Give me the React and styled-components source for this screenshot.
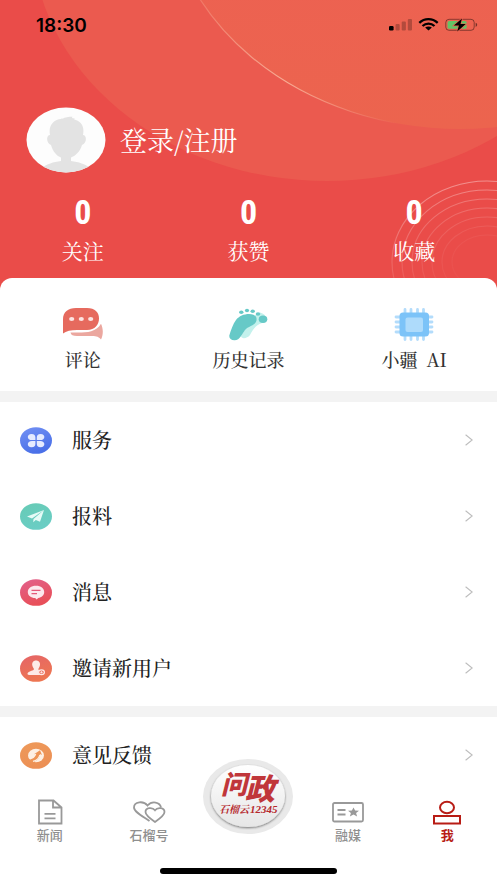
import styled, { createGlobalStyle } from "styled-components";

const serif = `"Noto Serif CJK SC", "Liberation Serif", "Noto Sans CJK SC", serif`;
const sans = `"Noto Sans CJK SC", "Liberation Sans", sans-serif`;

const stats = [
  { label: "关注", value: 0 },
  { label: "获赞", value: 0 },
  { label: "收藏", value: 0 },
];

const rings = [0, 1, 2, 3, 4, 5, 6];

export default function App() {
  return (
    <Container>
      <GlobalStyle />
      <Hero>
        <HeroArt />
        <StatusBar>
          <time>18:30</time>
          <StatusIcons />
        </StatusBar>
        <Profile href="#login">
          <AvatarIcon />
          <span>登录/注册</span>
        </Profile>
        <Stats>
          {stats.map((item) => (
            <Stat href="#stat" key={item.label}>
              <strong>{item.value}</strong>
              <span>{item.label}</span>
            </Stat>
          ))}
        </Stats>
      </Hero>
      <Shortcuts>
        <Shortcut><CommentIcon />评论</Shortcut>
        <Shortcut><FootIcon />历史记录</Shortcut>
        <Shortcut><ChipIcon />小疆&nbsp; AI</Shortcut>
      </Shortcuts>
      <Menu>
        <MenuRow icon={<ServiceIcon />} text="服务" />
        <MenuRow icon={<PlaneIcon />} text="报料" />
        <MenuRow icon={<MessageIcon />} text="消息" />
        <MenuRow icon={<InviteIcon />} text="邀请新用户" />
      </Menu>
      <Menu>
        <MenuRow icon={<FeedbackIcon />} text="意见反馈" />
      </Menu>
      <TabBar>
        <Tabs>
          <Tab href="#news"><NewsIcon />新闻</Tab>
          <Tab href="#shiliu"><HeartsIcon />石榴号</Tab>
          <CenterTab href="#wenzheng"><WenzhengLogo /></CenterTab>
          <Tab href="#media"><MediaIcon />融媒</Tab>
          <Tab href="#me" $active><MeIcon />我</Tab>
        </Tabs>
        <HomeIndicator />
      </TabBar>
    </Container>
  );
}

function MenuRow({ icon, text }) {
  return (
    <Row>
      {icon}
      <span>{text}</span>
      <svg width="8" height="12" viewBox="0 0 8 12" fill="none" stroke="#bdbdbd" strokeWidth="1.1">
        <path d="M.6.7 7.2 6 .6 11.3" />
      </svg>
    </Row>
  );
}

function HeroArt() {
  return (
    <Art viewBox="0 0 497 294" preserveAspectRatio="xMidYMin slice" aria-hidden="true">
      <defs>
        <linearGradient id="arcLine" gradientUnits="userSpaceOnUse" x1="200" y1="0" x2="400" y2="120">
          <stop offset="0" stopColor="#f9b49c" stopOpacity=".3" />
          <stop offset=".5" stopColor="#f9b49c" stopOpacity=".9" />
          <stop offset="1" stopColor="#f9b49c" stopOpacity="0" />
        </linearGradient>
        <linearGradient id="arcFill" x1="0" y1="0" x2="0" y2="1">
          <stop offset=".5" stopColor="#ed6053" />
          <stop offset="1" stopColor="#ec644e" />
        </linearGradient>
        <linearGradient id="ringLine" gradientUnits="userSpaceOnUse" x1="0" y1="180" x2="0" y2="290">
          <stop offset="0" stopColor="#fff" stopOpacity=".38" />
          <stop offset="1" stopColor="#fff" stopOpacity=".08" />
        </linearGradient>
      </defs>
      <ellipse cx="327" cy="-65" rx="295" ry="246" fill="#eb5a4f" />
      <ellipse cx="460" cy="-117" rx="295" ry="246" fill="url(#arcFill)" />
      <ellipse cx="460" cy="-117" rx="295" ry="246" fill="none" stroke="url(#arcLine)" strokeWidth="1.2" />
      {rings.map((i) => (
        <ellipse key={i} cx="487" cy="262" rx={95 - i * 10} ry={81 - i * 9} fill="none"
          stroke="url(#ringLine)" strokeWidth="1.1" opacity={1 - i * 0.13} />
      ))}
    </Art>
  );
}

function StatusIcons() {
  return (
    <svg width="90" height="14" viewBox="0 0 90 14" aria-hidden="true">
      <rect x="0" y="8" width="4.6" height="4.5" rx="1.2" />
      <g opacity=".24">
        <rect x="6.5" y="6" width="4.2" height="6.5" rx="1" />
        <rect x="12.7" y="3.5" width="4.2" height="9" rx="1" />
        <rect x="18.8" y="1" width="4.2" height="11.5" rx="1" />
      </g>
      <g fill="none" stroke="#000" strokeWidth="2.3">
        <path d="M30.3 4.9C35.5-.1 43.3-.1 48.7 4.9" />
        <path d="M33.5 8C37 4.8 42 4.8 45.5 8" />
      </g>
      <path d="M36.1 9.6c2-1.6 4.8-1.6 6.8 0l-3.4 3z" />
      <rect x="56.8" y="1.3" width="28.4" height="11" rx="3.2" fill="none" stroke="#000" strokeOpacity=".42" />
      <path d="M86.700 4.700c2 .7 2 3.400 0 4.200z" opacity=".5" />
      <rect x="58.6" y="3" width="19" height="7.8" rx="1.6" fill="#64c466" />
      <path d="M73 .5 64.8 7.6h5.1l-1.7 5.900 8.500-7.400h-5.200z" stroke="#ec624f" strokeWidth="1.4" paintOrder="stroke" />
    </svg>
  );
}

function AvatarIcon() {
  return (
    <svg width="80" height="66" viewBox="0 0 80 66" aria-hidden="true">
      <clipPath id="avatarClip"><ellipse cx="40" cy="33" rx="39.5" ry="32.5" /></clipPath>
      <ellipse cx="40" cy="33" rx="39.5" ry="32.5" fill="#fdfdfd" />
      <g clipPath="url(#avatarClip)" fill="#e3e3e3">
        <path d="M24 28C22 18 28 12.500 35 12l1-.8.6.6c2-1.500 6-2 10-2l-.8 1.200 3 .4-.8.800C54 14 59 18 57 28c4 0 4 8-1 10-2 7-7 11-11 12.500v3.500c8 1 14 3 19 7v8H16v-8c5-4 11-6 19-7v-3.500c-4-1.500-8-5.500-10-12.500-5-2-5-10-1-10z" />
      </g>
    </svg>
  );
}

function CommentIcon() {
  return (
    <svg width="40" height="33" viewBox="0 0 40 33" aria-hidden="true">
      <path d="M7.500 24.600C18 24.200 32 26.500 38 15.800c2.400 5 2.400 11 0 15.700-3-3.500-6-3.500-10-3.500H14c-4 0-6-.8-6.500-3.400z" fill="#eba79f" />
      <path d="M0 25.500V11.500C0 4 5 0 13 0h11c8 0 12 4.500 12 10.500S32 22 24 22H14C8 22 3 23 0 25.500z" fill="#e66a5e" stroke="#fff" strokeWidth="2" paintOrder="stroke" />
      <g fill="#fce4e1">
        <ellipse cx="8.700" cy="11" rx="2.600" ry="2.100" />
        <ellipse cx="18.300" cy="11" rx="2.600" ry="2.100" />
        <ellipse cx="27.700" cy="11" rx="2.600" ry="2.100" />
      </g>
    </svg>
  );
}

function FootIcon() {
  return (
    <svg width="39" height="33" viewBox="0 0 39 33" aria-hidden="true">
      <path d="M12 28c0 3 6 3 9-1 3-6 6-10 12-12 6-2 5-9-2-10.500L25 8z" fill="#c3f1ec" />
      <path d="M.3 27.500C2 22 4 16 7 12c3-4 8-6 13-6 6 0 8.500 3 7.300 7-1.300 5-8.300 5-11.600 9.500C13 26 11 32 5.700 32.300 2 32.400 0 30.500.3 27.500z" fill="#66c9c7" />
      <g fill="#66c9c7">
        <ellipse cx="12.300" cy="4.200" rx="2.200" ry="1.700" />
        <ellipse cx="18" cy="2.500" rx="2.100" ry="1.700" />
        <ellipse cx="23.700" cy="3.300" rx="2.200" ry="1.700" />
        <ellipse cx="29" cy="6" rx="2.300" ry="1.800" />
        <ellipse cx="34" cy="11.300" rx="4.300" ry="3.700" />
      </g>
    </svg>
  );
}

function ChipIcon() {
  return (
    <svg width="40" height="33" viewBox="0 0 40 33" aria-hidden="true">
      <path d="M11 1.500v30M17 1.500v30M23.500 1.500v30M29.500 1.500v30M2 9h36M2 14h36M2 19h36M2 24h36" stroke="#b3dcfb" strokeWidth="2.800" strokeLinecap="round" />
      <rect x="5.500" y="4.500" width="29.500" height="24" rx="3.500" fill="#7cc3f8" />
      <rect x="11.500" y="9.500" width="17.500" height="14.500" rx="2" fill="#aedbfb" />
    </svg>
  );
}

function RoundIcon({ id, from, to, children }) {
  return (
    <svg width="32" height="27" viewBox="0 0 32 27" aria-hidden="true">
      <linearGradient id={id} x1="0" y1="0" x2=".4" y2="1">
        <stop offset="0" stopColor={from} />
        <stop offset="1" stopColor={to} />
      </linearGradient>
      <ellipse cx="16" cy="13.500" rx="16" ry="13.300" fill={`url(#${id})`} />
      {children}
    </svg>
  );
}

const ServiceIcon = () => (
  <RoundIcon id="service" from="#7391f4" to="#4a70e8">
    <g fill="#e5ebff">
      <path d="M15.400 13.100H12C6.500 13.100 6.500 6.900 11.500 6.900c3 0 3.900 1.600 3.900 3.600zM16.800 13.100h3.400c5.500 0 5.500-6.200.5-6.200-3 0-3.900 1.600-3.900 3.600zM15.400 14.100H12c-5.500 0-5.500 6.200-.5 6.200 3 0 3.900-1.600 3.900-3.600zM16.800 14.100h3.400c5.500 0 5.500 6.200.5 6.200-3 0-3.900-1.600-3.900-3.600z" />
    </g>
  </RoundIcon>
);

const PlaneIcon = () => (
  <RoundIcon id="plane" from="#67cbb5" to="#6acdc4">
    <path d="M24 7 7 13.500l5 2zM24 7l-10.500 9-.3 3.300 2.600-2.300 4.200 1.700z" fill="#e6fbf7" />
  </RoundIcon>
);

const MessageIcon = () => (
  <RoundIcon id="message" from="#e2618d" to="#e84f59">
    <path d="M16 6.800c5 0 8.200 2.700 8.200 6.200 0 3.300-2.600 5.500-6 6l-1.600 1.500-1.400-1.400C11 18.900 7.800 16.500 7.800 13c0-3.500 3.200-6.200 8.200-6.200z" fill="#fce8ee" />
    <path d="M11.500 11.400h9M11.500 14.600h5.500" stroke="#e5587a" strokeWidth="1.200" />
  </RoundIcon>
);

const InviteIcon = () => (
  <RoundIcon id="invite" from="#e56468" to="#ed7652">
    <path d="M16 5.500c3 0 4.300 2.200 4 4.600-.2 2-1.500 3-1.600 4.200 0 1 1.400 1.400 3 2-1.700 1-1.700 2.500-1 3.700H9c-2 0-2-2.200.2-3.200 2-.9 4.800-1.300 4.700-2.700-.1-1-1.500-2-1.700-4-.2-2.400.9-4.600 3.800-4.600z" fill="#fdebe7" />
    <ellipse cx="21.500" cy="17.300" rx="2.900" ry="2.400" fill="#ea6d5b" stroke="#fdebe7" strokeWidth="1.200" />
    <path d="M20.200 17.300h2.600M21.500 16.200v2.200" stroke="#fdebe7" strokeWidth=".9" />
  </RoundIcon>
);

const FeedbackIcon = () => (
  <RoundIcon id="feedback" from="#ee9a5a" to="#ec9055">
    <ellipse cx="16" cy="13.500" rx="8" ry="6.700" fill="#fdf0e4" />
    <path d="M8 17.500c4 .5 7.500-2 8.300-5.700l-2.300.4 6-4 2 4.700-1.800-.8c-.6 4.400-3.700 7.600-8.400 8.600z" fill="#ee9557" />
    <path d="M13 19.400c3.500-1 6-3.300 6.900-6.600" stroke="#fdf0e4" strokeWidth="1.200" fill="none" />
  </RoundIcon>
);

const NewsIcon = () => (
  <svg width="26" height="26" viewBox="0 0 26 26" fill="none" stroke="#999" strokeWidth="1.800" aria-hidden="true">
    <path d="M2 1.500H16.500L24.500 8.500V24.500H2zM16 2v6.500h8M7.500 14.800h11M7.500 19.400h11" />
  </svg>
);

const HeartsIcon = () => (
  <svg width="34" height="26" viewBox="0 0 34 26" fill="none" stroke="#999" strokeWidth="1.800" aria-hidden="true">
    <path d="M17.500 22C11 17.500 2 13 2 8.500 2 2.500 11.500 1.500 15.500 6.500 20 1.500 28 3 29 8.500" />
    <path d="M23 23c-5-3.500-9.500-7-9.500-10 0-4.500 7-5 9.500-1.700 2.500-3.300 9.500-2.800 9.500 1.700 0 3-4.500 6.500-9.500 10z" />
  </svg>
);

const MediaIcon = () => (
  <svg width="32" height="26" viewBox="0 0 32 26" fill="none" stroke="#999" strokeWidth="1.800" aria-hidden="true">
    <rect x="1" y="4" width="30" height="18.500" rx="1.500" />
    <path d="M5.500 11h8M5.500 15.500h8" />
    <path d="m21.500 8.500 1.600 3 3.900.3-2.900 2.200 1 3.500-3.600-1.900-3.600 1.900 1-3.500-2.900-2.200 3.900-.3z" fill="#999" stroke="none" />
  </svg>
);

const MeIcon = () => (
  <svg width="28" height="26" viewBox="0 0 28 26" fill="none" stroke="currentColor" strokeWidth="2" aria-hidden="true">
    <ellipse cx="14" cy="8.500" rx="7" ry="5.800" />
    <rect x="1" y="17" width="26" height="7.500" />
  </svg>
);

function WenzhengLogo() {
  return (
    <svg width="90" height="76" viewBox="0 0 90 76" role="img" aria-label="问政">
      <defs>
        <linearGradient id="button" x1="0" y1="0" x2="0" y2="1">
          <stop offset="0" stopColor="#fff" />
          <stop offset="1" stopColor="#e6e6e6" />
        </linearGradient>
        <filter id="shade" x="-20%" y="-20%" width="140%" height="140%">
          <feDropShadow dx="0" dy="1" stdDeviation="1.200" floodOpacity=".5" />
        </filter>
      </defs>
      <ellipse cx="45" cy="37.500" rx="45" ry="37.500" fill="#e9e9e9" />
      <ellipse cx="45" cy="37" rx="37" ry="31" fill="url(#button)" filter="url(#shade)" />
      <g fill="#c0363a" fontFamily="Noto Sans CJK SC, sans-serif" fontWeight="900" fontStyle="italic">
        <text x="18" y="35" fontSize="26">问</text>
        <text x="42" y="41" fontSize="30">政</text>
      </g>
      <g fill="#b5282c" fontStyle="italic" fontWeight="700">
        <text x="16" y="54" fontSize="10" fontFamily="Noto Serif CJK SC, serif">石榴云</text>
        <text x="47" y="54" fontSize="11" fontFamily="Liberation Serif, serif">12345</text>
      </g>
    </svg>
  );
}

const GlobalStyle = createGlobalStyle`
  * {
    box-sizing: border-box;
  }
  body {
    margin: 0;
    background: #f3f3f3;
  }
  svg {
    display: block;
    flex: none;
  }
  a {
    color: inherit;
    text-decoration: none;
  }
  button {
    border: 0;
    padding: 0;
    background: none;
    cursor: pointer;
  }
`;

const Container = styled.div`
  min-height: 100vh;
  display: flex;
  flex-direction: column;
  font-family: ${serif};
`;

const Hero = styled.header`
  position: relative;
  background: #ea4c49;
  color: #fff;
  padding-bottom: 30px;
`;

const Art = styled.svg`
  position: absolute;
  inset: 0;
  width: 100%;
  height: 100%;
`;

const StatusBar = styled.div`
  position: relative;
  display: flex;
  align-items: center;
  justify-content: space-between;
  height: 50px;
  padding: 0 18px 0 36px;
  color: #000;
  font: 600 19px Inter, sans-serif;
`;

const Profile = styled.a`
  position: relative;
  display: flex;
  align-items: center;
  gap: 14px;
  margin-top: 57px;
  padding: 0 26px;
  font-size: 27px;
  line-height: 32px;
`;

const Stats = styled.div`
  position: relative;
  display: grid;
  grid-template-columns: repeat(3, 1fr);
  margin-top: 23px;
`;

const Stat = styled.a`
  display: flex;
  flex-direction: column;
  align-items: center;
  gap: 8px;
  font-size: 21px;
  line-height: 28px;
  strong {
    font: 700 34px/32px "Roboto Condensed", Roboto, sans-serif;
  }
`;

const Shortcuts = styled.nav`
  position: relative;
  display: grid;
  grid-template-columns: repeat(3, 1fr);
  margin-top: -16px;
  padding: 30px 0 20px;
  border-radius: 12px 12px 0 0;
  background: #fff;
`;

const Shortcut = styled.button`
  display: flex;
  flex-direction: column;
  align-items: center;
  gap: 6px;
  color: #333;
  font: 500 18px/24px ${serif};
`;

const Menu = styled.section`
  margin-top: 11px;
  background: #fff;
`;

const Row = styled.button`
  display: flex;
  align-items: center;
  width: 100%;
  height: 76px;
  padding: 0 24px 0 20px;
  color: #222;
  font: 500 20px/28px ${serif};
  text-align: left;
  span {
    flex: 1;
    padding-left: 20px;
  }
`;

const TabBar = styled.footer`
  display: flex;
  flex: 1;
  flex-direction: column;
  align-items: center;
  justify-content: space-between;
  padding-bottom: 9px;
  background: #fff;
`;

const Tabs = styled.nav`
  display: grid;
  grid-template-columns: repeat(5, 1fr);
  width: 100%;
`;

const Tab = styled.a`
  display: flex;
  flex-direction: column;
  align-items: center;
  gap: 1px;
  padding-top: 6px;
  color: ${(props) => (props.$active ? "#b81c15" : "#8f8f8f")};
  font-family: ${sans};
  font-size: 13px;
  font-weight: ${(props) => (props.$active ? 700 : 500)};
  line-height: 18px;
`;

const CenterTab = styled.a`
  position: relative;
  display: flex;
  justify-content: center;
  margin-top: -34px;
`;

const HomeIndicator = styled.div`
  width: 177px;
  height: 6px;
  border-radius: 3px;
  background: #000;
`;
